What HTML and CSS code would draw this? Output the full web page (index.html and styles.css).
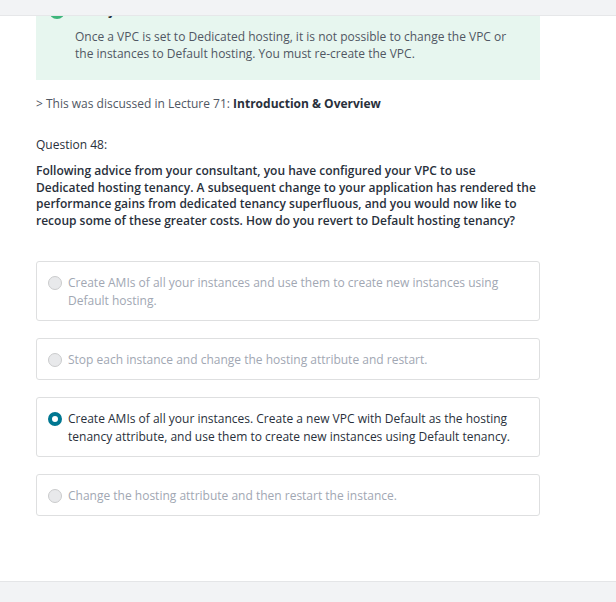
FILE: index.html
```html
<!DOCTYPE html>
<html lang="en">
<head>
<meta charset="utf-8">
<title>Question 48</title>
<link rel="stylesheet" href="styles.css">
</head>
<body>
<div class="page">
  <header class="topbar"></header>
  <main class="main">
    <div class="content">
      <section class="feedback">
        <svg class="fb-icon" width="16" height="16" viewBox="0 0 16 16"><circle cx="8" cy="8" r="8" fill="#3eb57b"/><path d="M4.5 8.2l2.3 2.3 4.7-4.8" fill="none" stroke="#fff" stroke-width="1.8"/></svg>
        <div class="fb-title">Good job!</div>
        <p class="fb-text">Once a VPC is set to Dedicated hosting, it is not possible to change the VPC or the instances to Default hosting. You must re-create the VPC.</p>
      </section>

      <p class="lecture">&gt; This was discussed in Lecture 71: <strong>Introduction &amp; Overview</strong></p>

      <p class="qnum">Question 48:</p>
      <p class="qtext">Following advice from your consultant, you have configured your VPC to use Dedicated hosting tenancy. A subsequent change to your application has rendered the performance gains from dedicated tenancy superfluous, and you would now like to recoup some of these greater costs. How do you revert to Default hosting tenancy?</p>

      <ul class="options">
        <li class="option"><span class="radio"></span><span class="opt-text">Create AMIs of all your instances and use them to create new instances using Default hosting.</span></li>
        <li class="option"><span class="radio"></span><span class="opt-text">Stop each instance and change the hosting attribute and restart.</span></li>
        <li class="option selected"><span class="radio"></span><span class="opt-text">Create AMIs of all your instances. Create a new VPC with Default as the hosting tenancy attribute, and use them to create new instances using Default tenancy.</span></li>
        <li class="option"><span class="radio"></span><span class="opt-text">Change the hosting attribute and then restart the instance.</span></li>
      </ul>
    </div>
  </main>
  <footer class="footer"></footer>
</div>
</body>
</html>
```

FILE: styles.css
```css
* { box-sizing: border-box; }
html, body { margin: 0; padding: 0; background: #fff; }
body {
  font-family: "Open Sans", "Noto Sans", sans-serif;
  font-size: 12px;
  color: #29303b;
}
.page {
  display: flex;
  flex-direction: column;
  height: 100vh;
}
.topbar {
  flex: 0 0 16px;
  background: #f2f3f5;
  border-bottom: 1px solid #e6e7e9;
}
.main {
  flex: 1 1 auto;
  overflow: hidden;
}
.content {
  margin: -30px 76px 0 36px;
}
.feedback {
  display: grid;
  grid-template-columns: 16px 1fr;
  column-gap: 10px;
  align-items: center;
  background: #e7f6ef;
  padding: 16px 20px 18px 13px;
}
.fb-title {
  font-weight: 700;
  line-height: 18px;
  color: #29303b;
}
.fb-text {
  grid-column: 2;
  margin: 9px 0 0;
  line-height: 16.5px;
  color: #505763;
}
.lecture {
  margin: 15px 0 0;
  line-height: 17px;
  color: #505763;
}
.lecture strong { color: #29303b; font-weight: 700; }
.qnum {
  margin: 24px 0 0;
  line-height: 17px;
  color: #29303b;
}
.qtext {
  margin: 10px 0 0;
  padding-right: 4px;
  font-weight: 600;
  line-height: 16.7px;
  color: #29303b;
}
.options {
  list-style: none;
  margin: 31px 0 0;
  padding: 0;
  display: flex;
  flex-direction: column;
  gap: 17px;
}
.option {
  display: flex;
  align-items: flex-start;
  gap: 6px;
  border: 1px solid #dedfe0;
  border-radius: 3px;
  padding: 12px 24px 10px 11px;
  line-height: 18px;
  color: #a1a7b3;
}
.radio {
  flex: 0 0 14px;
  width: 14px;
  height: 14px;
  margin-top: 2px;
  border-radius: 50%;
  background: #e8e9eb;
  border: 1px solid #cacbcc;
}
.selected { color: #29303b; }
.selected .radio {
  background: #fff;
  border: 4px solid #007791;
}
.footer {
  flex: 0 0 21px;
  background: #f2f3f5;
  border-top: 1px solid #e4e5e7;
}
```
